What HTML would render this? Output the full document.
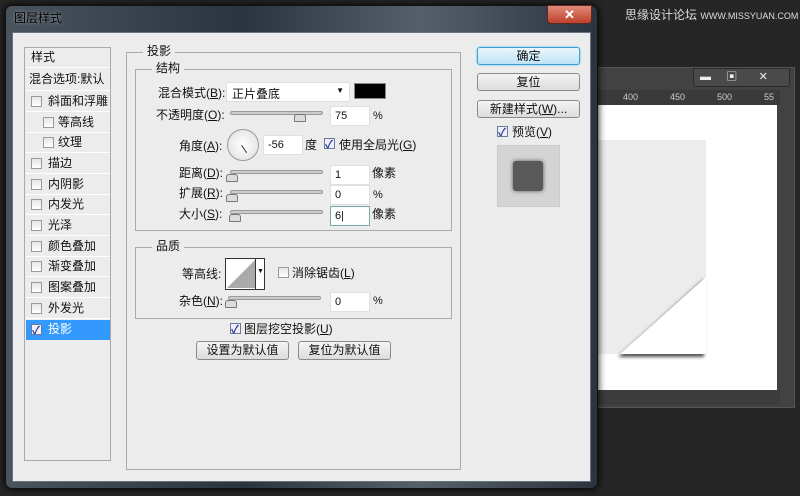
<!DOCTYPE html>
<html><head><meta charset="utf-8"><style>
*{margin:0;padding:0;box-sizing:border-box}
body{width:800px;height:496px;background:#262626;position:relative;overflow:hidden;font-family:"Liberation Sans","Noto Sans CJK SC",sans-serif;font-size:12px;color:#111}
.a{position:absolute}
.t{position:absolute;white-space:nowrap;line-height:14px}
.cb{position:absolute;width:11px;height:11px;border:1px solid #9a9a9a;background:linear-gradient(#e6e6e6,#fff)}
.cbc{border-color:#6a7a9a;background:#eef;}
.cbc:after{content:"✓";position:absolute;left:0;top:-3px;font-size:11px;color:#2a3a8a;font-weight:bold}
.sl{position:absolute;height:4px;border:1px solid #999;border-radius:2px;background:#ccc}
.th{position:absolute;width:12px;height:8px;border:1px solid #777;border-radius:3px 3px 1px 1px;background:#ddd}
.in{position:absolute;height:20px;background:#fff;border:1px solid #e0e0e0;padding:3px 4px;font-size:11px}
.btn{position:absolute;height:19px;border:1px solid #8a8a8a;border-radius:3px;background:linear-gradient(#f4f4f4,#dcdcdc);text-align:center;line-height:17px}
.li{position:absolute;left:1px;width:84px;height:20px;border-bottom:1px solid #fff;line-height:19px}
</style></head><body>
<div class="t" style="left:625px;top:8px;color:#ddd;font-size:12px">思缘设计论坛 <span style="font-size:9px;letter-spacing:0">WWW.MISSYUAN.COM</span></div>
<!-- PS window -->
<div class="a" style="left:590px;top:67px;width:205px;height:341px;background:#424242;border:1px solid #555"></div>
<div class="a" style="left:693px;top:68px;width:97px;height:19px;background:#4a4a4a;border:1px solid #2a2a2a;border-radius:0 0 3px 3px"></div>
<div class="t" style="left:700px;top:70px;color:#eee;font-size:11px">▬ &nbsp;&nbsp;&nbsp; ▣ &nbsp;&nbsp;&nbsp;&nbsp;&nbsp; ✕</div>
<div class="a" style="left:597px;top:90px;width:183px;height:15px;background:#3a3a3a;color:#ccc;font-size:9px"><span class="t" style="left:26px;top:0">400</span><span class="t" style="left:73px;top:0">450</span><span class="t" style="left:120px;top:0">500</span><span class="t" style="left:167px;top:0">55</span></div>
<div class="a" style="left:597px;top:105px;width:180px;height:285px;background:#fff"></div>
<div class="a" style="left:597px;top:140px;width:109px;height:214px;background:#ececec"></div>
<svg class="a" style="left:600px;top:270px" width="112" height="90"><defs><filter id="f"><feGaussianBlur stdDeviation="1.5"/></filter></defs><polygon points="106,8 20,86 106,86" fill="#555" filter="url(#f)" transform="translate(-2,1)"/><polygon points="106,7 20,84 106,84" fill="#fff"/></svg>
<div class="a" style="left:597px;top:390px;width:183px;height:15px;background:#3c3c3c"></div>
<!-- dialog -->
<div class="a" style="left:5px;top:5px;width:593px;height:484px;border-radius:7px;background:linear-gradient(90deg,#4a545e,#2a343e 40%,#56606a 70%,#2c3440);border:1px solid #111;box-shadow:0 0 8px #000"></div>
<div class="t" style="left:14px;top:11px;color:#000;font-size:12px;text-shadow:0 0 3px rgba(255,255,255,.5)">图层样式</div>
<div class="a" style="left:547px;top:5px;width:45px;height:19px;border-radius:0 0 4px 4px;background:linear-gradient(#e08a7a,#c0402a);border:1px solid #5a2a22;color:#fff;text-align:center;font-size:13px;font-weight:bold;line-height:17px">✕</div>
<div class="a" style="left:12px;top:32px;width:579px;height:450px;background:#ececec;border:1px solid #6a7480"></div>
<!-- left list -->
<div class="a" style="left:24px;top:47px;width:87px;height:414px;border:1px solid #aaa;background:#ececec">
<div class="li" style="top:0;padding-left:5px">样式</div>
<div class="li" style="top:20px;height:23px;padding-left:3px;line-height:22px">混合选项:默认</div>
<div class="li" style="top:44px;padding-left:22px">斜面和浮雕</div><div class="cb" style="left:6px;top:48px"></div>
<div class="li" style="top:65px;padding-left:32px">等高线</div><div class="cb" style="left:18px;top:69px"></div>
<div class="li" style="top:85px;padding-left:32px">纹理</div><div class="cb" style="left:18px;top:89px"></div>
<div class="li" style="top:106px;padding-left:22px">描边</div><div class="cb" style="left:6px;top:110px"></div>
<div class="li" style="top:127px;padding-left:22px">内阴影</div><div class="cb" style="left:6px;top:131px"></div>
<div class="li" style="top:147px;padding-left:22px">内发光</div><div class="cb" style="left:6px;top:151px"></div>
<div class="li" style="top:168px;padding-left:22px">光泽</div><div class="cb" style="left:6px;top:172px"></div>
<div class="li" style="top:189px;padding-left:22px">颜色叠加</div><div class="cb" style="left:6px;top:193px"></div>
<div class="li" style="top:209px;padding-left:22px">渐变叠加</div><div class="cb" style="left:6px;top:213px"></div>
<div class="li" style="top:230px;padding-left:22px">图案叠加</div><div class="cb" style="left:6px;top:234px"></div>
<div class="li" style="top:251px;padding-left:22px">外发光</div><div class="cb" style="left:6px;top:255px"></div>
<div class="li" style="top:272px;padding-left:22px;background:#3399ff;color:#fff;border:0">投影</div><div class="cb cbc" style="left:6px;top:276px"></div>
</div>
<!-- main panel -->
<div class="a" style="left:126px;top:52px;width:335px;height:418px;border:1px solid #aaa"></div>
<div class="t" style="left:143px;top:44px;background:#ececec;padding:0 4px">投影</div>
<div class="a" style="left:135px;top:69px;width:317px;height:162px;border:1px solid #aaa"></div>
<div class="t" style="left:152px;top:61px;background:#ececec;padding:0 4px">结构</div>
<div class="t" style="left:158px;top:86px">混合模式(<u>B</u>):</div>
<div class="a" style="left:226px;top:82px;width:124px;height:20px;background:#fff;border:1px solid #ddd;padding:2px 5px">正片叠底<span style="position:absolute;right:5px;top:3px;font-size:8px">▼</span></div>
<div class="a" style="left:354px;top:83px;width:32px;height:16px;background:#000;border:1px solid #888"></div>
<div class="t" style="left:156px;top:108px">不透明度(<u>O</u>):</div>
<div class="sl" style="left:230px;top:111px;width:93px"></div><div class="th" style="left:294px;top:114px"></div>
<div class="in" style="left:330px;top:106px;width:40px">75</div><div class="t" style="left:373px;top:109px;font-size:11px">%</div>
<div class="t" style="left:179px;top:139px">角度(<u>A</u>):</div>
<div class="a" style="left:227px;top:129px;width:32px;height:32px;border-radius:50%;border:1px solid #999;background:radial-gradient(#fff,#ddd)"></div>
<div class="a" style="left:242px;top:145px;width:9px;height:1px;background:#333;transform:rotate(56deg);transform-origin:0 0"></div>
<div class="in" style="left:263px;top:135px;width:40px">-56</div>
<div class="t" style="left:305px;top:138px">度</div>
<div class="cb cbc" style="left:324px;top:138px"></div><div class="t" style="left:339px;top:138px">使用全局光(<u>G</u>)</div>
<div class="t" style="left:179px;top:166px">距离(<u>D</u>):</div>
<div class="sl" style="left:230px;top:170px;width:93px"></div><div class="th" style="left:226px;top:174px"></div>
<div class="in" style="left:330px;top:165px;width:40px">1</div><div class="t" style="left:372px;top:166px">像素</div>
<div class="t" style="left:179px;top:186px">扩展(<u>R</u>):</div>
<div class="sl" style="left:230px;top:190px;width:93px"></div><div class="th" style="left:226px;top:194px"></div>
<div class="in" style="left:330px;top:185px;width:40px">0</div><div class="t" style="left:373px;top:188px;font-size:11px">%</div>
<div class="t" style="left:179px;top:207px">大小(<u>S</u>):</div>
<div class="sl" style="left:230px;top:210px;width:93px"></div><div class="th" style="left:229px;top:214px"></div>
<div class="in" style="left:330px;top:206px;width:40px;border-color:#7aa">6|</div><div class="t" style="left:372px;top:207px">像素</div>
<!-- quality -->
<div class="a" style="left:135px;top:247px;width:317px;height:72px;border:1px solid #aaa"></div>
<div class="t" style="left:152px;top:239px;background:#ececec;padding:0 4px">品质</div>
<div class="t" style="left:182px;top:267px">等高线:</div>
<div class="a" style="left:225px;top:258px;width:40px;height:32px;border:1px solid #333;background:#fff"></div>
<svg class="a" style="left:227px;top:260px" width="28" height="28"><polygon points="28,0 0,28 28,28" fill="#aaa"/></svg>
<div class="a" style="left:255px;top:258px;width:10px;height:32px;border-left:1px solid #333;font-size:7px;text-align:center;line-height:28px">▼</div>
<div class="cb" style="left:278px;top:267px"></div><div class="t" style="left:292px;top:266px">消除锯齿(<u>L</u>)</div>
<div class="t" style="left:179px;top:294px">杂色(<u>N</u>):</div>
<div class="sl" style="left:228px;top:296px;width:93px"></div><div class="th" style="left:225px;top:300px"></div>
<div class="in" style="left:330px;top:292px;width:40px">0</div><div class="t" style="left:373px;top:294px;font-size:11px">%</div>
<div class="cb cbc" style="left:230px;top:323px"></div><div class="t" style="left:244px;top:322px">图层挖空投影(<u>U</u>)</div>
<div class="btn" style="left:196px;top:341px;width:93px">设置为默认值</div>
<div class="btn" style="left:298px;top:341px;width:93px">复位为默认值</div>
<!-- right buttons -->
<div class="btn" style="left:477px;top:47px;width:103px;height:18px;border-color:#3aa0d0;background:linear-gradient(#eaf6fc,#bfe4f6);box-shadow:0 0 2px #5bc0ee">确定</div>
<div class="btn" style="left:477px;top:73px;width:103px;height:18px">复位</div>
<div class="btn" style="left:477px;top:100px;width:103px;height:18px">新建样式(<u>W</u>)...</div>
<div class="cb cbc" style="left:497px;top:126px"></div><div class="t" style="left:512px;top:125px">预览(<u>V</u>)</div>
<div class="a" style="left:497px;top:145px;width:63px;height:62px;background:#d4d4d4;border:1px solid #ccc"></div>
<div class="a" style="left:513px;top:161px;width:30px;height:30px;background:#595959;border-radius:3px;box-shadow:0 0 4px #555"></div>
</body></html>
